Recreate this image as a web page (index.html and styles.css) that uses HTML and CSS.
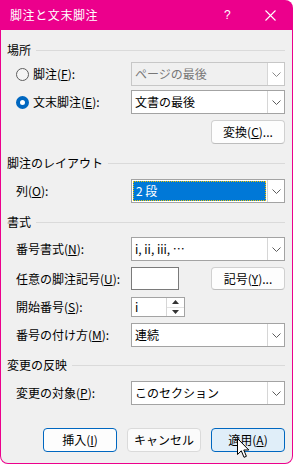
FILE: index.html
```html
<!DOCTYPE html>
<html lang="ja">
  <head>
    <meta charset="utf-8" />
    <title>脚注と文末脚注</title>
    <link rel="stylesheet" href="styles.css">
  </head>
  <body>
    <div class="dialog">
      <div class="titlebar">
        <span class="title">脚注と文末脚注</span>
        <span class="help">?</span>
        <span class="close">
          <svg width="11" height="11" viewBox="0 0 11 11"><path d="M0.5 0.5L10.5 10.5M10.5 0.5L0.5 10.5" stroke="#fff" stroke-width="1.1" fill="none"/></svg>
        </span>
      </div>

      <div class="content">
        <div class="group-title"><span>場所</span></div>

        <div class="row gap-4">
          <label class="radio"><span class="radio-mark"></span>脚注(<u>F</u>):</label>
          <div class="combo disabled">
            <span class="value">ページの最後</span>
            <span class="arrow"><svg width="9" height="5" viewBox="0 0 9 5"><path d="M0.5 0.5L4.5 4.5L8.5 0.5" stroke="#8a8a8a" fill="none"/></svg></span>
          </div>
        </div>

        <div class="row gap-4">
          <label class="radio"><span class="radio-mark checked"></span>文末脚注(<u>E</u>):</label>
          <div class="combo">
            <span class="value">文書の最後</span>
            <span class="arrow"><svg width="9" height="5" viewBox="0 0 9 5"><path d="M0.5 0.5L4.5 4.5L8.5 0.5" stroke="#5d5d5d" fill="none"/></svg></span>
          </div>
        </div>

        <div class="row gap-6">
          <span></span>
          <div class="push"><button class="btn">変換(<u>C</u>)...</button></div>
        </div>

        <div class="group-title gap-11"><span>脚注のレイアウト</span></div>

        <div class="row gap-8">
          <label class="label">列(<u>O</u>):</label>
          <div class="combo">
            <span class="value selected"><span>2 段</span></span>
            <span class="arrow"><svg width="9" height="5" viewBox="0 0 9 5"><path d="M0.5 0.5L4.5 4.5L8.5 0.5" stroke="#5d5d5d" fill="none"/></svg></span>
          </div>
        </div>

        <div class="group-title gap-11"><span>書式</span></div>

        <div class="row gap-7">
          <label class="label">番号書式(<u>N</u>):</label>
          <div class="combo">
            <span class="value">i, ii, iii, …</span>
            <span class="arrow"><svg width="9" height="5" viewBox="0 0 9 5"><path d="M0.5 0.5L4.5 4.5L8.5 0.5" stroke="#5d5d5d" fill="none"/></svg></span>
          </div>
        </div>

        <div class="row gap-6 row-short">
          <label class="label">任意の脚注記号(<u>U</u>):</label>
          <div class="split">
            <div class="textbox"></div>
            <button class="btn">記号(<u>Y</u>)...</button>
          </div>
        </div>

        <div class="row gap-7 row-spin">
          <label class="label">開始番号(<u>S</u>):</label>
          <div class="spin">
            <span class="value">i</span>
            <span class="spin-arrows">
              <span class="up"><svg width="7" height="4" viewBox="0 0 7 4"><path d="M0 4L3.5 0L7 4Z" fill="#333"/></svg></span>
              <span class="down"><svg width="7" height="4" viewBox="0 0 7 4"><path d="M0 0L3.5 4L7 0Z" fill="#333"/></svg></span>
            </span>
          </div>
        </div>

        <div class="row gap-6">
          <label class="label">番号の付け方(<u>M</u>):</label>
          <div class="combo">
            <span class="value">連続</span>
            <span class="arrow"><svg width="9" height="5" viewBox="0 0 9 5"><path d="M0.5 0.5L4.5 4.5L8.5 0.5" stroke="#5d5d5d" fill="none"/></svg></span>
          </div>
        </div>

        <div class="group-title gap-10"><span>変更の反映</span></div>

        <div class="row gap-8">
          <label class="label">変更の対象(<u>P</u>):</label>
          <div class="combo">
            <span class="value">このセクション</span>
            <span class="arrow"><svg width="9" height="5" viewBox="0 0 9 5"><path d="M0.5 0.5L4.5 4.5L8.5 0.5" stroke="#5d5d5d" fill="none"/></svg></span>
          </div>
        </div>

        <div class="footer">
          <button class="btn footer-btn default">挿入(<u>I</u>)</button>
          <button class="btn footer-btn plain">キャンセル</button>
          <button class="btn footer-btn default hover">適用(<u>A</u>)</button>
        </div>
      </div>

      <svg class="cursor" width="13" height="21" viewBox="0 0 13 21">
        <path d="M0.5 0.5L0.5 16.5L4.3 12.8L7 19.3L9.4 18.3L6.8 12L11.8 12Z" fill="#fff" stroke="#000" stroke-width="1" stroke-linejoin="round"/>
      </svg>
    </div>
  </body>
</html>
```

FILE: styles.css
```css
/* Page */

html,
body {
  margin: 0;
  background: #fff;
  font-family: "Noto Sans CJK JP", "Noto Sans", sans-serif;
  font-size: 12px;
  color: #000;
}

.dialog {
  position: relative;
  width: 291px;
  height: 463px;
  padding: 0 1px 1px 1px;
  background: #ec008c;
  border-radius: 0 8px 8px 8px;
  overflow: hidden;
}

/* Title bar */

.titlebar {
  display: flex;
  align-items: center;
  height: 30px;
  color: #fff;
}

.titlebar .title {
  flex: 1;
  padding-left: 9px;
  font-size: 12px;
  letter-spacing: 0.6px;
  line-height: 16px;
}

.titlebar .help {
  width: 41px;
  font-family: "Liberation Sans", sans-serif;
  font-size: 12px;
  line-height: 16px;
}

.titlebar .close {
  display: flex;
  width: 27px;
  padding-top: 1px;
}

/* Body */

.content {
  height: 421px;
  padding: 12px 7px 0 6px;
  background: #f0f0f0;
  border-radius: 0 0 7px 7px;
}

.group-title {
  display: flex;
  align-items: center;
  height: 16px;
  line-height: 16px;
}

.group-title:after {
  content: '';
  flex: 1;
  height: 1px;
  margin-left: 5px;
  background: #dadada;
}

.gap-4 { margin-top: 4px; }
.gap-6 { margin-top: 6px; }
.gap-7 { margin-top: 7px; }
.gap-8 { margin-top: 8px; }
.gap-10 { margin-top: 10px; }
.gap-11 { margin-top: 11px; }

.row {
  display: grid;
  grid-template-columns: 124px 154px;
  align-items: center;
  height: 24px;
}

.row-short {
  height: 23px;
}

.row-spin {
  height: 20px;
}

.label {
  padding-left: 9px;
  line-height: 16px;
}

.radio {
  display: flex;
  align-items: center;
  padding-left: 9px;
  line-height: 16px;
}

.radio-mark {
  box-sizing: border-box;
  width: 13px;
  height: 13px;
  margin-right: 4px;
  border: 1px solid #5e5e5e;
  border-radius: 50%;
  background: #f5f5f5;
}

.radio-mark.checked {
  border: 4px solid #0067c0;
  background: #fff;
}

/* Combo boxes */

.combo {
  box-sizing: border-box;
  display: flex;
  height: 24px;
  border: 1px solid #a3a3a3;
  background: #fff;
}

.combo .value {
  flex: 1;
  padding-left: 3px;
  line-height: 22px;
  white-space: nowrap;
  overflow: hidden;
}

.combo.disabled {
  border-color: #c7c7c7;
  background: #f0f0f0;
}

.combo.disabled .value {
  color: #777;
}

.combo .arrow {
  box-sizing: border-box;
  display: flex;
  align-items: center;
  justify-content: center;
  width: 17px;
  border-left: 1px solid #d6d6d6;
  background: #fff;
}

.combo .value.selected {
  padding: 1px;
}

.combo .value.selected span {
  display: block;
  height: 18px;
  padding-left: 2px;
  line-height: 18px;
  color: #fff;
  background: #0078d7;
  border: 1px dotted #f2c500;
}

/* Text inputs */

.split {
  display: flex;
  justify-content: space-between;
  align-items: center;
}

.textbox {
  box-sizing: border-box;
  width: 48px;
  height: 23px;
  border: 1px solid #7a7a7a;
  background: #fff;
}

.spin {
  box-sizing: border-box;
  display: flex;
  width: 54px;
  height: 20px;
  border: 1px solid #a3a3a3;
  background: #fff;
}

.spin .value {
  flex: 1;
  padding-left: 3px;
  line-height: 18px;
}

.spin-arrows {
  display: flex;
  flex-direction: column;
  width: 17px;
  border-left: 1px solid #d6d6d6;
}

.spin-arrows span {
  flex: 1;
  display: flex;
  align-items: center;
  justify-content: center;
}

.spin-arrows .up {
  border-bottom: 1px solid #e2e2e2;
}

/* Buttons */

.push {
  display: flex;
  justify-content: flex-end;
}

.btn {
  box-sizing: border-box;
  width: 74px;
  height: 24px;
  padding: 0;
  font-family: inherit;
  font-size: 12px;
  line-height: 16px;
  color: #000;
  background: #fdfdfd;
  border: 1px solid #d0d0d0;
  border-bottom-color: #bdbdbd;
  border-radius: 4px;
}

.split .btn {
  height: 23px;
}

.footer {
  display: flex;
  justify-content: flex-end;
  gap: 10px;
  margin-top: 23px;
}

.footer-btn.default {
  border: 1px solid #0067c0;
}

.footer-btn.plain {
  border-color: #dadada;
  background: #fbfbfb;
}

.footer-btn.hover {
  background: #e0eef9;
}

/* Mouse pointer over the apply button */

.cursor {
  position: absolute;
  left: 237px;
  top: 438px;
}
```
